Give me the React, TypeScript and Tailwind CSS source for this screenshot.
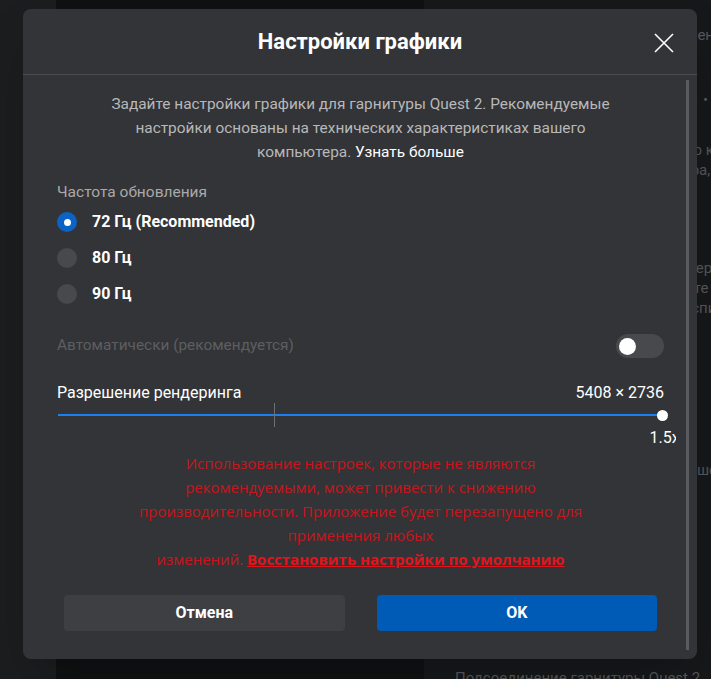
const rates = ['72 Гц (Recommended)', '80 Гц', '90 Гц'];

function Radio({ label, checked }: { label: string; checked?: boolean }) {
  return (
    <div className="flex h-9 items-center gap-[15px]">
      {checked ? (
        <div className="flex h-5 w-5 items-center justify-center rounded-full bg-[#0b63c4]">
          <div className="h-[7px] w-[7px] rounded-full bg-white" />
        </div>
      ) : (
        <div className="h-5 w-5 rounded-full bg-[#48494c]" />
      )}
      <span className="text-[16px] font-bold text-white">{label}</span>
    </div>
  );
}

export default function App() {
  return (
    <div className="relative h-[679px] w-[711px] overflow-hidden bg-[#101112] font-['Roboto',sans-serif]">
      {/* page behind the dialog */}
      <div className="flex h-full">
        <div className="w-[56px] bg-[#1c1d1f]" />
        <div className="w-[368px] bg-[#101112]" />
        <div className="flex-1 overflow-hidden whitespace-nowrap bg-[#17181a] pl-[31px] text-[15px] text-[#56575a]">
          <div className="pt-[24px] leading-[22px]">Режим разработчика будет включен в гарнитуре</div>
          <div className="mt-[43px] pl-[248px] leading-[22px]">•</div>
          <div className="mt-[29px] leading-[20px]">Подключите гарнитуру с помощью ключю</div>
          <div className="leading-[20px]">кабеля к порту USB 3.0 компьютера, структуры</div>
          <div className="mt-[78px] leading-[20px]">Подключите гарнитуру к компьютеру через сер</div>
          <div className="leading-[20px]">кабель или Air Link, затем включите его сер</div>
          <div className="leading-[20px]">и выберите нужное устройство в списке, на</div>
          <div className="mt-[142px] leading-[20px]">Частота обновления 72 Гц и разрешение 27</div>
          <div className="mt-[188px] leading-[20px]">Подсоединение гарнитуры Quest 2</div>
        </div>
      </div>

      {/* dialog */}
      <div className="absolute left-[23px] top-[9px] flex h-[650px] w-[674px] flex-col rounded-lg bg-[#333437] shadow-2xl">
        <div className="relative flex h-[66px] shrink-0 items-center justify-center border-b border-[#4a4b4e]">
          <h2 className="text-[22px] font-bold text-white">Настройки графики</h2>
          <button className="absolute left-[631px] top-[24px] text-white">
            <svg width="20" height="20" viewBox="0 0 20 20" fill="none" stroke="currentColor" strokeWidth="1.6">
              <path d="M1 1L19 19M19 1L1 19" />
            </svg>
          </button>
        </div>

        <div className="flex min-h-0 flex-1">
          <div className="flex-1 overflow-hidden pl-[34px] pr-[12px] pt-[17px]">
            <p className="text-center text-[15.4px] leading-[24px] text-[#b8b8b9]">
              Задайте настройки графики для гарнитуры Quest 2. Рекомендуемые
              <br />
              настройки основаны на технических характеристиках вашего
              <br />
              компьютера. <span className="text-white">Узнать больше</span>
            </p>

            <div className="mt-[16px] text-[15.5px] leading-[24px] text-[#a9a9aa]">Частота обновления</div>
            <div className="flex flex-col">
              {rates.map((r, i) => (
                <Radio key={r} label={r} checked={i === 0} />
              ))}
            </div>

            <div className="mt-[22px] flex h-6 items-center justify-between">
              <span className="text-[15.4px] text-[#5d5e61]">Автоматически (рекомендуется)</span>
              <div className="flex h-6 w-12 items-center rounded-full bg-[#48494c] px-[3px]">
                <div className="h-[17px] w-[17px] rounded-full bg-white" />
              </div>
            </div>

            <div className="mt-[25px] flex items-center justify-between text-[16px] leading-[20px] text-white">
              <span>Разрешение рендеринга</span>
              <span>5408 × 2736</span>
            </div>

            <div className="relative mx-px h-6">
              <div className="absolute left-0 right-0 top-[11px] h-[2px] bg-[#1a7ff0]" />
              <div className="absolute left-[216px] top-0 h-6 w-px bg-[#6e6f72]" />
              <div className="absolute right-[-5px] top-[7px] h-[11px] w-[11px] rounded-full bg-white" />
              <div className="absolute left-full top-[25px] -translate-x-[45%] text-[16px] leading-[20px] text-white">1.5x</div>
            </div>

            <p className="mt-[24px] text-center font-['Open_Sans',sans-serif] text-[15px] leading-[24px] text-[#c8151c]">
              Использование настроек, которые не являются
              <br />
              рекомендуемыми, может привести к снижению
              <br />
              производительности. Приложение будет перезапущено для
              <br />
              применения любых
              <br />
              изменений. <span className="font-bold text-[#e0151c] underline">Восстановить настройки по умолчанию</span>
            </p>

            <div className="mt-[24px] flex gap-8 px-[7px]">
              <button className="h-9 flex-1 rounded bg-[#3e3f42] text-[16px] font-bold text-white">Отмена</button>
              <button className="h-9 flex-1 rounded bg-[#005bb7] text-[16px] font-bold text-white">OK</button>
            </div>
          </div>

          <div className="w-[21px] shrink-0 pb-[9px] pt-[5px]">
            <div className="ml-[10px] h-full w-[3px] bg-[#5a5b5e]" />
          </div>
        </div>
      </div>
    </div>
  );
}
